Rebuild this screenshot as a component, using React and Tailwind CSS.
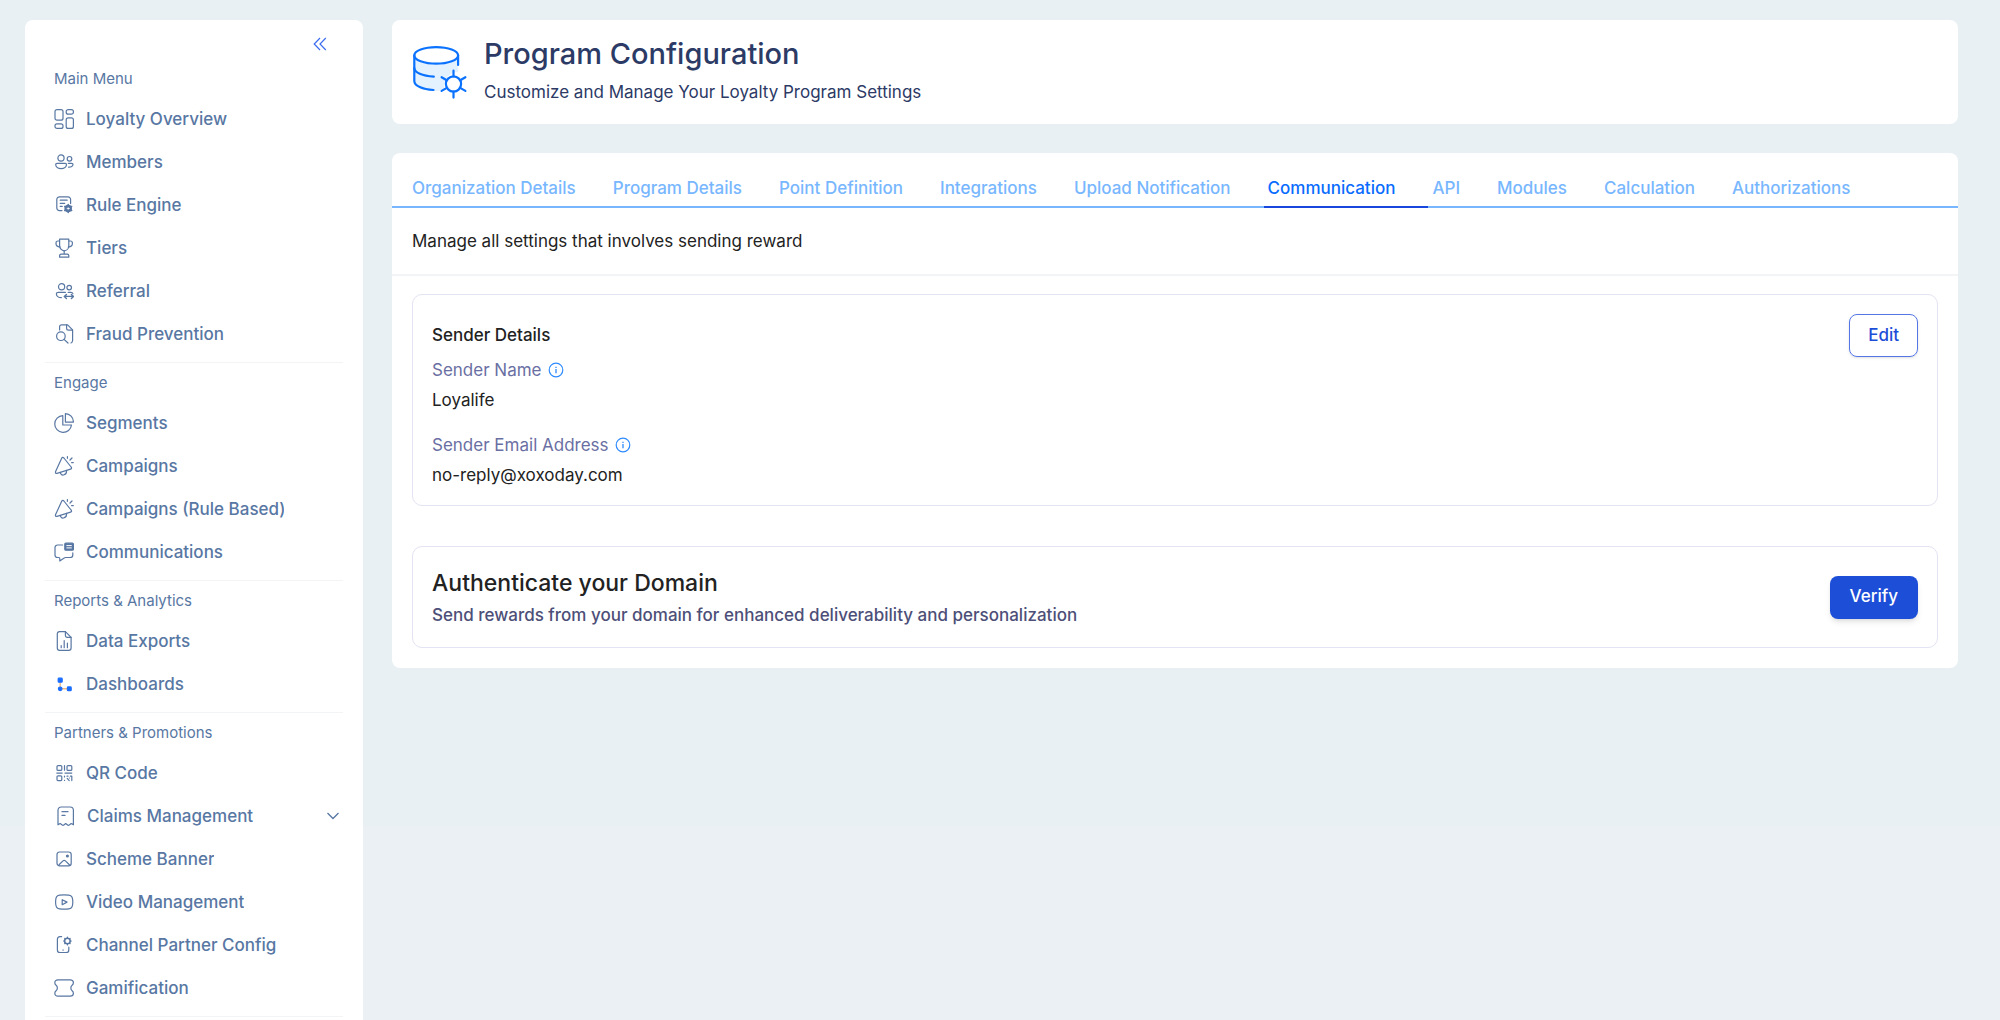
import { useState } from 'react'

// ─── Icons ────────────────────────────────────────────────────────────────────

function Icon({ children }) {
    return (
        <svg
            className="size-5 shrink-0"
            viewBox="0 0 20 20"
            fill="none"
            stroke="currentColor"
            strokeWidth="1.2"
            strokeLinecap="round"
            strokeLinejoin="round"
            aria-hidden="true"
        >
            {children}
        </svg>
    )
}

const OverviewIcon = () => (
    <Icon>
        <rect x="1" y="0.6" width="8" height="10.6" rx="2" />
        <rect x="12.2" y="0.6" width="7.2" height="4.6" rx="2" />
        <rect x="1" y="14.8" width="8" height="4.6" rx="2" />
        <rect x="12.2" y="8.8" width="7.2" height="10.6" rx="2" />
    </Icon>
)

const MembersIcon = () => (
    <Icon>
        <circle cx="7" cy="6" r="3.1" />
        <circle cx="15.5" cy="6.8" r="2.3" />
        <path d="M3 11.4h8.2c.8 0 1.3.5 1.3 1.2 0 2.4-2.4 4-5.4 4s-5.4-1.6-5.4-4c0-.7.5-1.2 1.3-1.2Z" />
        <path d="M14.4 11.4h3.2c.9 0 1.4.5 1.4 1.2 0 1.5-1.8 2.7-4.4 2.6" />
    </Icon>
)

const RuleIcon = () => (
    <Icon>
        <path d="M16.6 8.6V4.4a2.6 2.6 0 0 0-2.6-2.6H5.4a2.6 2.6 0 0 0-2.6 2.6V13a2.6 2.6 0 0 0 2.6 2.6H8" />
        <path d="M6.2 5.2h7M6.2 8.3h4.5M6.2 11.4h2" />
        <circle cx="14.2" cy="13.5" r="2.7" strokeWidth="2.2" />
        <path d="M14.2 9.6v7.8M10.8 11.5l6.8 4M10.8 15.5l6.8-4" strokeWidth="1.6" />
        <circle cx="14.2" cy="13.5" r="0.8" stroke="#fff" fill="#fff" strokeWidth="0.6" />
    </Icon>
)

const TrophyIcon = () => (
    <Icon>
        <path d="M5.6 1.2h9.2v6.2c0 3-2 5.4-4.6 5.4S5.6 10.4 5.6 7.4V1.2Z" />
        <path d="M5.6 3H4C2.8 3 2 3.800 2 5v.6c0 2 1.6 3.3 4.100 3.500M14.8 3h1.600c1.200 0 2 .8 2 2v.6c0 2-1.600 3.300-4.100 3.500" />
        <path d="M10.2 12.800v3.300M7.200 16.100h6c.9 0 1.600.7 1.600 1.600v1.500H5.600v-1.500c0-.9.7-1.600 1.600-1.600Z" />
    </Icon>
)

const ReferralIcon = () => (
    <Icon>
        <circle cx="7.6" cy="5.8" r="3.1" />
        <circle cx="15.2" cy="6.6" r="2.3" />
        <path d="M11.4 11.4h-7c-1.300 0-2 .6-2 1.500 0 2 2 3.700 5 3.700" />
        <path d="M14.2 11.4H17c1 0 1.600.4 1.900 1.200" />
        <path d="M10.600 15.400h8.600M12.400 13.400l-2.100 2 2.100 2M17.400 13.400l2.100 2-2.100 2" strokeWidth="1.4" />
    </Icon>
)

const FraudIcon = () => (
    <Icon>
        <path d="M5.600 6V2.800C5.600 1.500 6.400.8 7.600.8h6l5 5v10.800c0 1.300-.6 2-1.600 2.400" />
        <path d="M12.600.8v3.400c0 1.200.6 1.900 1.900 1.900h4" />
        <circle cx="6.9" cy="12.2" r="4.3" />
        <path d="m10 15.400 4 3.600" />
    </Icon>
)

const SegmentsIcon = () => (
    <Icon>
        <path d="M8.800 2.600a8.400 8.400 0 1 0 8.700 9.400H8.800V2.600Z" />
        <path d="M11.400.600v8.500h8A8.300 8.300 0 0 0 11.400.600Z" />
    </Icon>
)

const CampaignIcon = () => (
    <Icon>
        <path d="M7.800 2.100 1.600 15.600c-.5 1.100.2 2.100 1.400 1.800l13.600-4.300c1-.3 1.300-1.300.5-2.100L9.900 2c-.7-.8-1.700-.8-2.100.100Z" />
        <path d="M6.200 16.400c.5 2 1.700 2.900 3.300 2.600 2-.3 3.300-1.800 3-4.600" />
        <path d="M13.400.6v1.700M18 2l-2 2M17.600 6.600h1.700" />
    </Icon>
)

const CommunicationsIcon = () => (
    <Icon>
        <path d="M8.600 3h-5A2.600 2.600 0 0 0 1 5.600V13c0 1.500 1.100 2.500 2.600 2.500h1.200c.8 0 1 .6 1 1.200v2.200l4-2.700c.7-.5 1.300-.7 2-.7H16c1.700 0 2.800-1 2.800-2.600v-2" />
        <rect x="10.800" y="1.2" width="8.6" height="7" rx="1" fill="currentColor" />
        <path d="M12.800 3.600h4.600M12.800 5.900h4.600" stroke="#fff" strokeWidth="1" />
    </Icon>
)

const ExportsIcon = () => (
    <Icon>
        <path d="M11.400.700H5.600A2.300 2.300 0 0 0 3.300 3v14c0 1.300 1 2.300 2.300 2.300h9.200c1.300 0 2.300-1 2.300-2.300V6.400L11.400.700Z" />
        <path d="M11.400.700v3.600c0 1.300.7 2.100 2 2.100h3.700" />
        <path d="M7.200 16.700v-2M10.200 16.700V9.600M13.400 16.700v-4.600" />
    </Icon>
)

const DashboardsIcon = () => (
    <Icon>
        <path d="M6.200 6v9M6.200 14.800h8" stroke="#f2b982" strokeWidth="1.4" />
        <rect x="4.2" y="4.2" width="4" height="4" rx="0.8" fill="#1a6dff" stroke="#1a6dff" />
        <circle cx="6.2" cy="14.800" r="1.800" fill="#1a6dff" stroke="#1a6dff" />
        <rect x="13.400" y="12.900" width="3.800" height="3.800" rx="0.8" fill="#1a6dff" stroke="#1a6dff" />
    </Icon>
)

const QrIcon = () => (
    <Icon>
        <rect x="3" y="2.6" width="4.8" height="4.8" rx="1" />
        <rect x="13" y="2.6" width="4.8" height="4.8" rx="1" />
        <rect x="3" y="12.8" width="4.8" height="4.8" rx="1" />
        <path d="M10.500 2.600v4.600M2.800 10.100h5.400M11 10.100h6.800M10.500 13v1M10.500 17.400h.1M13 13.200h1M16.400 13.200h1.400v4.400M13.200 15.400l2 2.200M15.400 15h.1" />
    </Icon>
)

const ClaimsIcon = () => (
    <Icon>
        <path d="M3 18.800V4.200A3.200 3.200 0 0 1 6.200 1h9a3.200 3.200 0 0 1 3.200 3.200v14.600l-2.200-1.300-2 1.500c-.6.500-1 .5-1.600 0l-1.900-1.500L8.800 19c-.6.500-1 .5-1.600 0l-2-1.500L3 18.800Z" />
        <path d="M7 5.700h6M7 9.400h3" />
    </Icon>
)

const BannerIcon = () => (
    <Icon>
        <rect x="3" y="3" width="14.2" height="13.8" rx="2.6" />
        <path d="m5 15.800 4-3.900c.8-.7 1.600-.7 2.400 0l4 3.900" />
        <circle cx="13.400" cy="7" r="0.9" fill="currentColor" />
    </Icon>
)

const VideoIcon = () => (
    <Icon>
        <path d="M10 2.900c-3.400 0-5.600.2-6.700 1.100C2 5 1.600 7 1.600 10s.4 5 1.700 6c1.100.9 3.300 1.100 6.900 1.100s5.800-.2 6.900-1.100c1.300-1 1.700-3 1.700-6s-.4-5-1.700-6c-1.100-.9-3.500-1.100-7.100-1.100Z" />
        <path d="m8.200 7.700 4.800 2.400-4.800 2.600v-5Z" />
    </Icon>
)

const ChannelIcon = () => (
    <Icon>
        <path d="M7.600 1.700H6c-1.700 0-2.600.9-2.600 2.600v10.600c0 1.700.9 2.600 2.600 2.600h6.200c1.700 0 2.600-.9 2.600-2.600v-2.700" />
        <path d="M8.800 15h.6" />
        <circle cx="13.400" cy="6" r="2.8" strokeWidth="1.5" />
        <path d="M13.400 2v1.200M13.400 8.800V10M9.500 6h1.100M16.200 6h1.100M10.700 3.300l.6.600M15.500 8.100l.6.600M10.700 8.700l.6-.6M15.500 3.900l.6-.6" />
    </Icon>
)

const TicketIcon = () => (
    <Icon>
        <path d="M4 1.900h12.200c2 0 3.200 1.100 3.200 2.900 0 1.200-.5 1.900-1.300 2.500-1.700 1.300-1.700 4.100 0 5.400.8.600 1.300 1.300 1.300 2.500 0 1.800-1.200 2.900-3.200 2.900H4c-2 0-3.200-1.100-3.200-2.900 0-1.200.5-1.900 1.300-2.500 1.700-1.300 1.700-4.100 0-5.400C1.300 6.700.8 6 .8 4.800.8 3 2 1.900 4 1.900Z" />
    </Icon>
)

function DatabaseIcon() {
    return (
        <svg
            className="h-[62px] w-14 shrink-0"
            viewBox="0 -6 56 62"
            fill="none"
            stroke="#0b72ff"
            strokeWidth="2.2"
            strokeLinecap="round"
            aria-hidden="true"
        >
            <path d="M2.500 12c3 5 11 7.500 22 7.500S43 17 46 11v16c-7 0-15 6-14 16-1 2-4 3-8 3-11 0-21.500-4-21.500-9Z" fill="#e4f1ff" stroke="none" />
            <ellipse cx="24.2" cy="10.4" rx="21.9" ry="8.3" />
            <path d="M2.300 10.400V36c0 4.800 8 8.500 19.200 9" />
            <path d="M46.100 10.400V20" />
            <path d="M2.300 23c0 4.500 8 8 19.500 8.600" />
            <circle cx="41.5" cy="39" r="7.6" fill="#fff" />
            <path d="M41.500 25.500v6M41.500 46.600v6M29.600 32.200l5.200 3M48.200 42.900l5.200 3M29.600 45.900l5.200-3M48.200 35.200l5.200-3" />
        </svg>
    )
}

function InfoIcon() {
    return (
        <svg className="size-4 shrink-0" viewBox="0 0 16 16" fill="none" stroke="#2e8bff" aria-hidden="true">
            <circle cx="8" cy="8" r="6.8" strokeWidth="1.2" />
            <path d="M8 7v4.200M8 4.800v1.200" strokeWidth="1.3" />
        </svg>
    )
}

// ─── Data ─────────────────────────────────────────────────────────────────────

const MENU = [
    {
        title: 'Main Menu',
        items: [
            { label: 'Loyalty Overview', icon: OverviewIcon },
            { label: 'Members', icon: MembersIcon },
            { label: 'Rule Engine', icon: RuleIcon },
            { label: 'Tiers', icon: TrophyIcon },
            { label: 'Referral', icon: ReferralIcon },
            { label: 'Fraud Prevention', icon: FraudIcon },
        ],
    },
    {
        title: 'Engage',
        items: [
            { label: 'Segments', icon: SegmentsIcon },
            { label: 'Campaigns', icon: CampaignIcon },
            { label: 'Campaigns (Rule Based)', icon: CampaignIcon },
            { label: 'Communications', icon: CommunicationsIcon },
        ],
    },
    {
        title: 'Reports & Analytics',
        items: [
            { label: 'Data Exports', icon: ExportsIcon },
            { label: 'Dashboards', icon: DashboardsIcon },
        ],
    },
    {
        title: 'Partners & Promotions',
        items: [
            { label: 'QR Code', icon: QrIcon },
            { label: 'Claims Management', icon: ClaimsIcon, expandable: true },
            { label: 'Scheme Banner', icon: BannerIcon },
            { label: 'Video Management', icon: VideoIcon },
            { label: 'Channel Partner Config', icon: ChannelIcon },
            { label: 'Gamification', icon: TicketIcon },
        ],
    },
]

const TABS = [
    'Organization Details',
    'Program Details',
    'Point Definition',
    'Integrations',
    'Upload Notification',
    'Communication',
    'API',
    'Modules',
    'Calculation',
    'Authorizations',
]

// ─── Sidebar ──────────────────────────────────────────────────────────────────

function MenuItem({ item }) {
    const ItemIcon = item.icon

    if (item.expandable) {
        return (
            <button type="button" className="flex h-[43px] w-full items-center gap-3 pr-1 pl-2.5 text-left">
                <ItemIcon />
                <span className="flex-1">{item.label}</span>
                <svg className="h-2 w-3" viewBox="0 0 12 8" fill="none" stroke="currentColor" strokeWidth="1.3" aria-hidden="true">
                    <path d="m0.500 1 5.500 5.500L11.500 1" />
                </svg>
            </button>
        )
    }

    return (
        <a href="#" className="flex h-[43px] items-center gap-3 px-[9px]">
            <ItemIcon />
            <span className="max-w-[198px] overflow-hidden whitespace-nowrap">{item.label}</span>
        </a>
    )
}

function Sidebar() {
    return (
        <aside className="w-[338px] shrink-0 rounded-t-lg bg-white px-5 text-[#5877a3]">
            <div className="flex h-[39px] items-center justify-end pt-2 pr-4">
                <button type="button" aria-label="Collapse menu" className="text-[#3c6cf0]">
                    <svg className="size-3.5" viewBox="0 0 14 14" fill="none" stroke="currentColor" strokeWidth="1.2" aria-hidden="true">
                        <path d="M7 1 1.200 7 7 13M12.800 1 7 7l5.800 6" />
                    </svg>
                </button>
            </div>
            <nav className="divide-y divide-gray-100 border-b border-gray-100">
                {MENU.map((group) => (
                    <section key={group.title} className="pb-[7px]">
                        <h2 className="px-[9px] pt-2.5 pb-2 text-[15px] leading-5">{group.title}</h2>
                        <ul className="text-[17px] leading-6 font-medium">
                            {group.items.map((item) => (
                                <li key={item.label}>
                                    <MenuItem item={item} />
                                </li>
                            ))}
                        </ul>
                    </section>
                ))}
            </nav>
        </aside>
    )
}

// ─── Communication tab ────────────────────────────────────────────────────────

function Field({ label, value }) {
    return (
        <div>
            <dt className="flex items-center gap-1.5 text-[#6a6fa3]">
                {label}
                <InfoIcon />
            </dt>
            <dd className="mt-1.5">{value}</dd>
        </div>
    )
}

function CommunicationTab() {
    return (
        <>
            <p className="border-b-2 border-gray-100 px-5 py-[21px] leading-6">
                Manage all settings that involves sending reward
            </p>
            <div className="flex flex-col gap-10 p-5 pt-[18px]">
                <section className="flex items-start justify-between rounded-[10px] border border-[#e3e3f3] p-[19px] pb-[18px]">
                    <div className="pt-[9px] leading-6">
                        <h2 className="font-medium">Sender Details</h2>
                        <dl className="mt-[11px] flex flex-col gap-[21px]">
                            <Field label="Sender Name" value="Loyalife" />
                            <Field label="Sender Email Address" value="no-reply@xoxoday.com" />
                        </dl>
                    </div>
                    <button
                        type="button"
                        className="h-[43px] rounded-lg border border-[#5577e6] px-[18px] font-medium text-[#1d4ed8] shadow-sm"
                    >
                        Edit
                    </button>
                </section>
                <section className="flex items-center justify-between rounded-[10px] border border-[#e3e3f3] px-[19px] py-5">
                    <div>
                        <h2 className="text-[23px] leading-8 font-medium">Authenticate your Domain</h2>
                        <p className="mt-1 leading-6 font-medium text-[#4d4f78]">
                            Send rewards from your domain for enhanced deliverability and personalization
                        </p>
                    </div>
                    <button type="button" className="h-[43px] rounded-lg bg-[#1d4ed8] px-5 font-medium text-white shadow-md">
                        Verify
                    </button>
                </section>
            </div>
        </>
    )
}

// ─── Page ─────────────────────────────────────────────────────────────────────

function App() {
    const [activeTab, setActiveTab] = useState('Communication')

    return (
        <div className="flex min-h-screen gap-[29px] bg-[linear-gradient(#e8f0f3_81%,#ebf0f5_81%)] pt-5 pr-[42px] pl-[25px] font-['Inter',sans-serif] text-[17px] text-[#222222]">
            <Sidebar />
            <main className="min-w-0 flex-1">
                <header className="flex items-center gap-4 rounded-lg bg-white px-5 pt-4 pb-5 text-[#2c3a66]">
                    <DatabaseIcon />
                    <div>
                        <h1 className="text-[29px] leading-9 font-medium">Program Configuration</h1>
                        <p className="mt-2 leading-6">Customize and Manage Your Loyalty Program Settings</p>
                    </div>
                </header>

                <div className="mt-[29px] rounded-lg bg-white">
                    <div role="tablist" className="flex border-b-2 border-[#78b7ff] px-4 pt-[11px]">
                        {TABS.map((tab) => (
                            <button
                                key={tab}
                                type="button"
                                role="tab"
                                aria-selected={activeTab === tab}
                                onClick={() => setActiveTab(tab)}
                                className={
                                    activeTab === tab
                                        ? '-mb-0.5 border-b-2 border-[#1747dc] pt-3 pr-[33px] pb-1.5 pl-1 leading-6 font-medium text-[#0a6cff]'
                                        : '-mb-0.5 border-b-2 border-transparent pt-3 pr-[33px] pb-1.5 pl-1 leading-6 font-medium text-[#78b7ff]'
                                }
                            >
                                {tab}
                            </button>
                        ))}
                    </div>
                    <CommunicationTab />
                </div>
            </main>
        </div>
    )
}

export default App
